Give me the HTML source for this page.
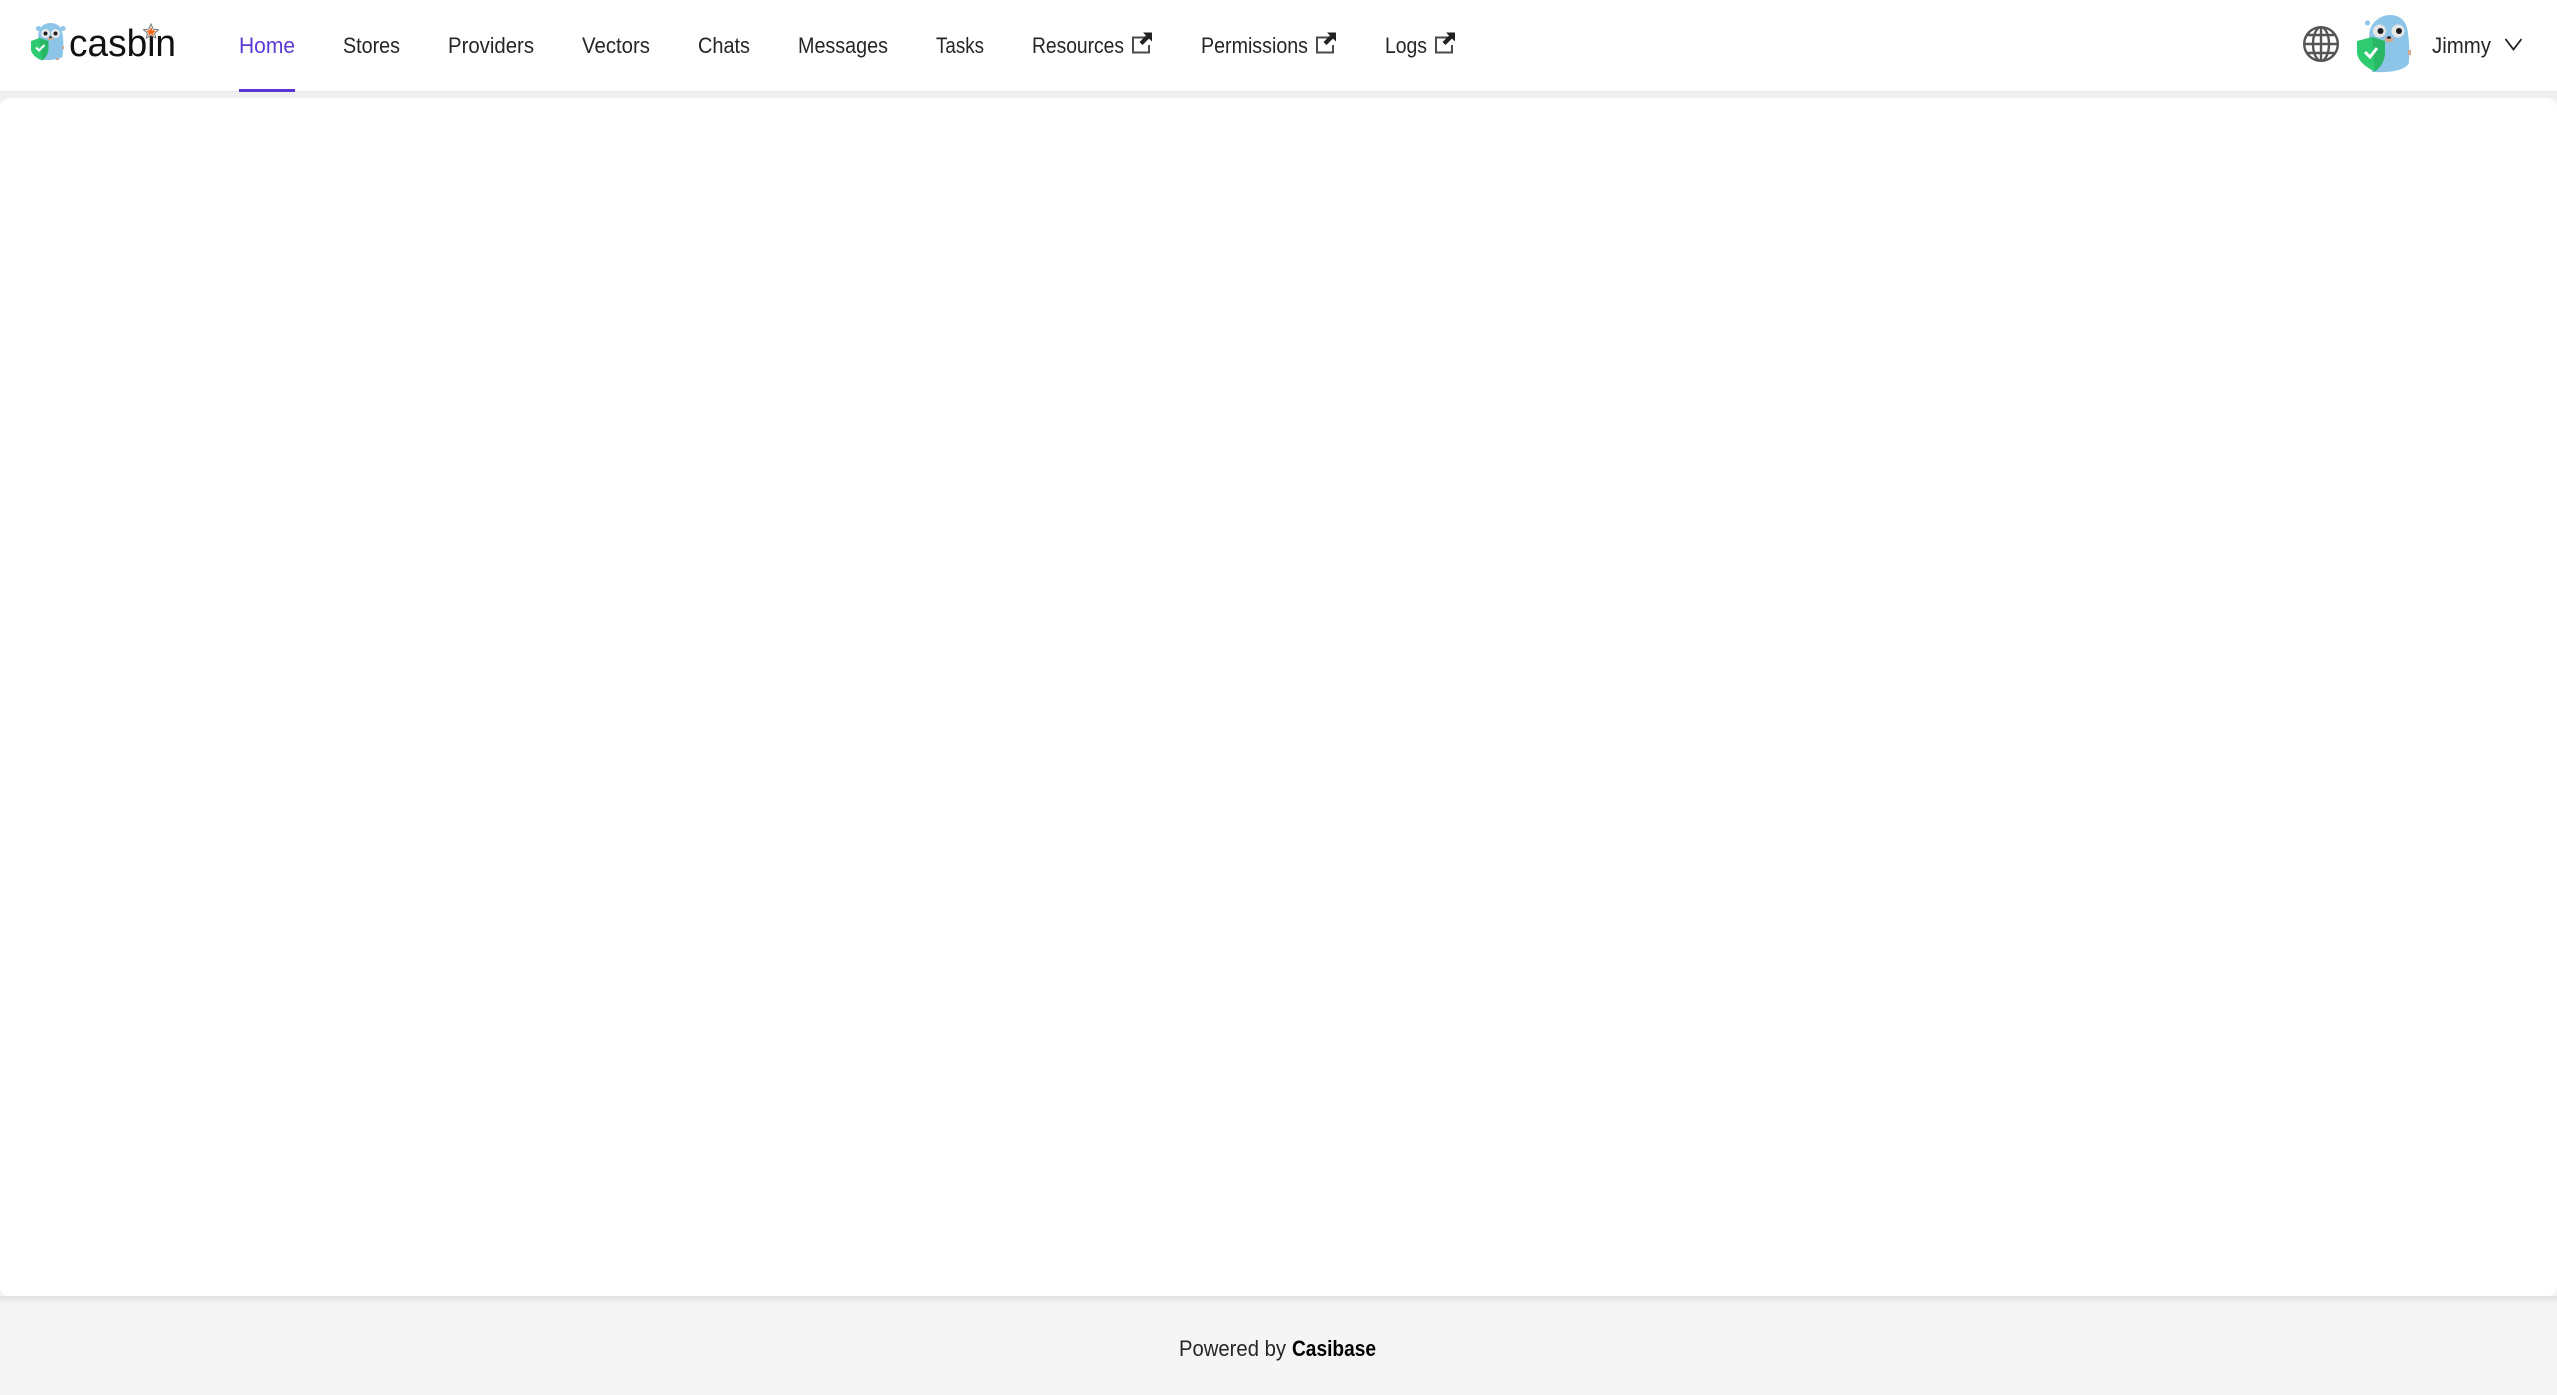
<!DOCTYPE html>
<html lang="en">
<head>
<meta charset="utf-8">
<title>Casibase</title>
<style>
html,body{margin:0;padding:0;width:2557px;height:1395px;overflow:hidden;background:#f5f5f5}
svg{display:block}
text{font-family:"Liberation Sans",sans-serif;font-size:22px;fill:#262626}
</style>
</head>
<body>
<svg width="2557" height="1395" viewBox="0 0 2557 1395" xmlns="http://www.w3.org/2000/svg">
<defs>
<linearGradient id="sh" x1="0" y1="0" x2="0" y2="1"><stop offset="0" stop-color="#e0e0e0"/><stop offset="1" stop-color="#f5f5f5"/></linearGradient>
<g id="ext">
<path d="M13 2.500H1V17.500H17V10" fill="none" stroke="#4a4a4a" stroke-width="2"/>
<path d="M20 -2.500V6.500L17 3.600L10.500 10L7.500 7L14 .6L11 -2.500Z" fill="#222"/>
</g>
</defs>
<rect width="2557" height="1395" fill="#f5f5f5"/>
<!-- header -->
<rect width="2557" height="92" fill="#fff"/>
<rect y="91" width="2557" height="1" fill="#ececec"/>
<rect y="92" width="2557" height="8" fill="#f0f0f0"/>
<!-- card -->
<rect y="1296" width="2557" height="8" fill="url(#sh)"/>
<rect x="0" y="98" width="2557" height="1198" rx="10" fill="#fff"/>
<!-- logo gopher -->
<g>
<circle cx="38.500" cy="28.500" r="2.500" fill="#8cc5e8"/><circle cx="63" cy="28.500" r="2.500" fill="#8cc5e8"/>
<path d="M38 59C38 50 37 38 39 31C41 25 46 23 50.500 23C55.500 23 60 25 62 31C64 38 63.500 50 62.500 57C58 60 45 61 38 59Z" fill="#8cc5e8"/>
<circle cx="45.500" cy="33.500" r="4.500" fill="#e8e8e8"/><circle cx="55.500" cy="33.500" r="4.500" fill="#e8e8e8"/>
<circle cx="45.500" cy="33.500" r="2" fill="#222"/><circle cx="55.500" cy="33.500" r="2" fill="#222"/>
<ellipse cx="50.500" cy="38.500" rx="3" ry="1.800" fill="#d2a98e"/><ellipse cx="50.500" cy="37.200" rx="1.300" ry=".9" fill="#222"/>
<rect x="62" y="46" width="2" height="3" fill="#d2a98e"/><rect x="41" y="58" width="3" height="2" fill="#d2a98e"/><rect x="56" y="58" width="3" height="2" fill="#d2a98e"/>
<path d="M39.500 38L31 41V49C31 54 36 58 42 60.500C46 57.500 48.500 53 48.500 48V41Z" fill="#2ecb70"/>
<path d="M39.500 38L48.500 41V48C48.500 53 46 57.500 42 60.500Z" fill="#27b765"/>
<path d="M36 47.500L39 50.500L44.500 45" fill="none" stroke="#fff" stroke-width="2"/>
</g>
<text x="69" y="56" textLength="107" lengthAdjust="spacingAndGlyphs" style="font-size:38px;fill:#111">casbin</text>
<!-- star -->
<path d="M151 24L153.300 29.200L158.500 29.800L154.600 33.300L155.700 38L151 35.500L146.300 38L147.400 33.300L143.500 29.800L148.700 29.200Z" fill="#fff" stroke="#777" stroke-width="1"/>
<path d="M151 27L152.400 30.300L156 30.700L153.300 33L154.100 36L151 34.300L147.900 36L148.700 33L146 30.700L149.600 30.300Z" fill="#f26a1b"/>
<!-- nav -->
<text x="239" y="53" textLength="56" lengthAdjust="spacingAndGlyphs" style="fill:#5b3bd6">Home</text>
<rect x="239" y="89" width="56" height="3" fill="#5734d3"/>
<text x="343" y="53" textLength="57" lengthAdjust="spacingAndGlyphs">Stores</text>
<text x="448" y="53" textLength="86" lengthAdjust="spacingAndGlyphs">Providers</text>
<text x="582" y="53" textLength="68" lengthAdjust="spacingAndGlyphs">Vectors</text>
<text x="698" y="53" textLength="52" lengthAdjust="spacingAndGlyphs">Chats</text>
<text x="798" y="53" textLength="90" lengthAdjust="spacingAndGlyphs">Messages</text>
<text x="936" y="53" textLength="48" lengthAdjust="spacingAndGlyphs">Tasks</text>
<text x="1032" y="53" textLength="92" lengthAdjust="spacingAndGlyphs">Resources</text>
<use href="#ext" x="1132" y="35"/>
<text x="1201" y="53" textLength="107" lengthAdjust="spacingAndGlyphs">Permissions</text>
<use href="#ext" x="1316" y="35"/>
<text x="1385" y="53" textLength="42" lengthAdjust="spacingAndGlyphs">Logs</text>
<use href="#ext" x="1435" y="35"/>
<!-- globe -->
<g fill="none" stroke="#555" stroke-width="2.400">
<circle cx="2321" cy="44" r="16.800"/>
<ellipse cx="2321" cy="44" rx="8" ry="16.800"/>
<path d="M2321 27V61M2304.200 44H2337.800M2307 35H2335M2307 53H2335"/>
</g>
<!-- avatar -->
<g>
<circle cx="2367.500" cy="23" r="2.500" fill="#8cc5e8"/>
<path d="M2372 72C2370 58 2367 36 2371 27C2375 19 2383 15 2390 15C2400 15 2406 21 2407.500 30C2409.500 42 2410 56 2408.500 64C2404 70 2392 73 2372 72Z" fill="#8cc5e8"/>
<circle cx="2379.500" cy="31" r="6.500" fill="#e6e6e6"/><circle cx="2398" cy="31" r="6.500" fill="#e6e6e6"/>
<circle cx="2380.500" cy="31" r="3" fill="#1d1d1d"/><circle cx="2399" cy="31" r="3" fill="#1d1d1d"/>
<ellipse cx="2389" cy="39.500" rx="4.500" ry="2.800" fill="#d2a98e"/><ellipse cx="2389" cy="37.500" rx="2" ry="1.300" fill="#1d1d1d"/>
<rect x="2408" y="50" width="3" height="5" fill="#d2a98e"/>
<path d="M2372 37L2357 41V52C2357 60 2365 67 2375 71.500C2381 67 2385 60 2385 52V41Z" fill="#2ecb70"/>
<path d="M2372 37L2385 41V52C2385 60 2381 67 2375 71.500Z" fill="#27b765"/>
<path d="M2365 52L2370 57L2377 48" fill="none" stroke="#fff" stroke-width="3"/>
</g>
<text x="2432" y="53" textLength="59" lengthAdjust="spacingAndGlyphs">Jimmy</text>
<path d="M2505.500 39L2513.500 49.500L2521.500 39" fill="none" stroke="#222" stroke-width="1.800"/>
<!-- footer -->
<text x="1179" y="1356" textLength="107" lengthAdjust="spacingAndGlyphs">Powered by</text>
<text x="1292" y="1356" textLength="84" lengthAdjust="spacingAndGlyphs" style="font-weight:700;fill:#000">Casibase</text>
</svg>
</body>
</html>
